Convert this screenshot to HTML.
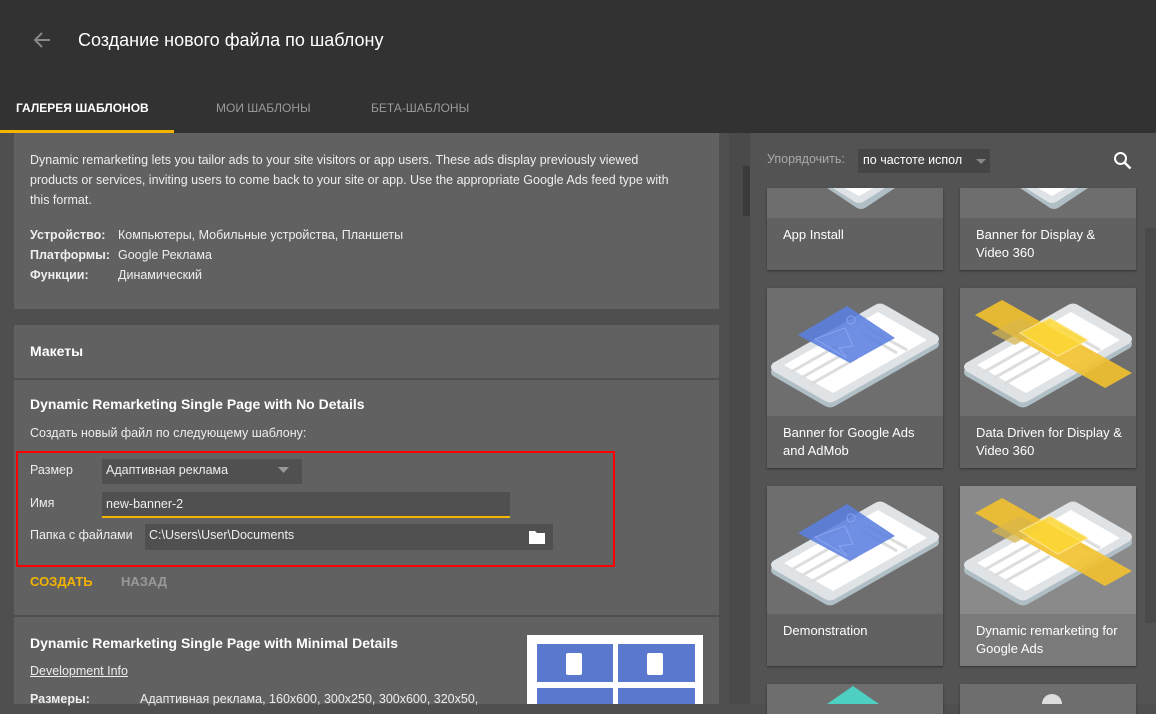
<!DOCTYPE html>
<html><head><meta charset="utf-8"><style>
*{margin:0;padding:0;box-sizing:border-box}
body{width:1156px;height:704px;overflow:hidden;background:#4f4f4f;font-family:"Liberation Sans","Noto Sans CJK SC",sans-serif;color:#fff;position:relative}
.abs{position:absolute}
.hdr{left:0;top:0;width:1156px;height:133px;background:#323232}
.t{font-size:13px;color:#eee}
.panel{background:#616161;left:14px;width:705px}
.card{position:absolute;width:176px;background:#616161;box-shadow:0 1px 2px rgba(0,0,0,.4);overflow:hidden}
.card .img{background:#6e6e6e;position:absolute;left:0;top:0;width:176px;overflow:hidden}
.card .lbl{position:absolute;left:16px;font-size:13px;line-height:18px;color:#fff}
</style></head><body>
<div class="abs hdr"></div>
<svg class="abs" style="left:32px;top:31px" width="20" height="18" viewBox="0 0 20 18"><path d="M18 9H3M10 2L3 9l7 7" stroke="#888" stroke-width="2" fill="none"/></svg>
<div class="abs" style="left:78px;top:30px;font-size:18px;color:#fff">Создание нового файла по шаблону</div>
<div class="abs" style="left:16px;top:101px;font-size:12px;font-weight:bold;color:#fff">ГАЛЕРЕЯ ШАБЛОНОВ</div>
<div class="abs" style="left:216px;top:101px;font-size:12px;color:#999">МОИ ШАБЛОНЫ</div>
<div class="abs" style="left:371px;top:101px;font-size:12px;color:#999">БЕТА-ШАБЛОНЫ</div>
<div class="abs" style="left:0;top:130px;width:174px;height:3px;background:#f4b400"></div>

<div class="abs" style="left:729px;top:133px;width:21px;height:571px;background:#4a4a4a"></div>
<div class="abs" style="left:743px;top:166px;width:7px;height:50px;background:#3a3a3a"></div>
<div class="abs" style="left:750px;top:133px;width:406px;height:571px;background:#535353"></div>
<div class="abs" style="left:1145px;top:228px;width:11px;height:395px;background:#4a4a4a"></div>

<div class="abs panel" style="top:133px;height:176px"></div>
<div class="abs t" style="left:30px;top:150px;width:645px;line-height:20px;font-size:12.5px">Dynamic remarketing lets you tailor ads to your site visitors or app users. These ads display previously viewed products or services, inviting users to come back to your site or app. Use the appropriate Google Ads feed type with this format.</div>
<div class="abs t" style="left:30px;top:225px;font-size:12.5px;line-height:20px;font-weight:bold">Устройство:<br>Платформы:<br>Функции:</div>
<div class="abs t" style="left:118px;top:225px;font-size:12.5px;line-height:20px">Компьютеры, Мобильные устройства, Планшеты<br>Google Реклама<br>Динамический</div>

<div class="abs panel" style="top:325px;height:53px"></div>
<div class="abs" style="left:30px;top:343px;font-size:14px;font-weight:bold">Макеты</div>
<div class="abs panel" style="top:380px;height:235px"></div>
<div class="abs" style="left:30px;top:396px;font-size:14px;font-weight:bold">Dynamic Remarketing Single Page with No Details</div>
<div class="abs t" style="left:30px;top:426px;font-size:12.5px">Создать новый файл по следующему шаблону:</div>
<div class="abs" style="left:16px;top:451px;width:599px;height:116px;border:2px solid #f00"></div>
<div class="abs t" style="left:30px;top:463px;font-size:12.5px">Размер</div>
<div class="abs" style="left:102px;top:459px;width:200px;height:25px;background:#505050"></div>
<div class="abs t" style="left:106px;top:463px;font-size:12.5px">Адаптивная реклама</div>
<svg class="abs" style="left:278px;top:467px" width="12" height="7"><path d="M0 0h11L5.5 6z" fill="#999"/></svg>
<div class="abs t" style="left:30px;top:496px;font-size:12.5px">Имя</div>
<div class="abs" style="left:102px;top:492px;width:408px;height:26px;background:#505050;border-bottom:2px solid #f4b400"></div>
<div class="abs t" style="left:106px;top:497px;font-size:12.5px">new-banner-2</div>
<div class="abs t" style="left:30px;top:528px;font-size:12.5px">Папка с файлами</div>
<div class="abs" style="left:145px;top:524px;width:408px;height:26px;background:#505050"></div>
<div class="abs t" style="left:149px;top:528px;font-size:12.5px">C:\Users\User\Documents</div>
<svg class="abs" style="left:529px;top:530px" width="16" height="14"><path d="M0 1h6l2 2h8v11H0z" fill="#fff"/></svg>
<div class="abs" style="left:30px;top:574px;font-size:13px;font-weight:bold;color:#f4b400">СОЗДАТЬ</div>
<div class="abs" style="left:121px;top:574px;font-size:13px;font-weight:bold;color:#999">НАЗАД</div>

<div class="abs panel" style="top:617px;height:87px"></div>
<div class="abs" style="left:30px;top:635px;font-size:14px;font-weight:bold">Dynamic Remarketing Single Page with Minimal Details</div>
<div class="abs t" style="left:30px;top:664px;font-size:12.5px;text-decoration:underline">Development Info</div>
<div class="abs t" style="left:30px;top:692px;font-size:12.5px;font-weight:bold">Размеры:</div>
<div class="abs t" style="left:140px;top:692px;font-size:12.5px">Адаптивная реклама, 160x600, 300x250, 300x600, 320x50,</div>
<div class="abs" style="left:527px;top:635px;width:176px;height:69px;background:#fff"></div>
<div class="abs" style="left:537px;top:644px;width:76px;height:38px;background:#5b78cf"></div>
<div class="abs" style="left:618px;top:644px;width:77px;height:38px;background:#5b78cf"></div>
<div class="abs" style="left:537px;top:688px;width:76px;height:16px;background:#5b78cf"></div>
<div class="abs" style="left:618px;top:688px;width:77px;height:16px;background:#5b78cf"></div>
<div class="abs" style="left:566px;top:653px;width:16px;height:22px;background:#fff;border-radius:2px"></div>
<div class="abs" style="left:647px;top:653px;width:16px;height:22px;background:#fff;border-radius:2px"></div>

<div class="abs" style="left:767px;top:152px;font-size:12.5px;color:#aaa">Упорядочить:</div>
<div class="abs" style="left:858px;top:149px;width:132px;height:24px;background:#454545"></div>
<div class="abs" style="left:863px;top:153px;font-size:12.5px;color:#fff">по частоте испол</div>
<svg class="abs" style="left:976px;top:159px" width="10" height="5"><path d="M0 0h10L5 5z" fill="#888"/></svg>
<svg class="abs" style="left:1113px;top:151px" width="20" height="20"><circle cx="7.5" cy="7.5" r="5.5" stroke="#fff" stroke-width="2" fill="none"/><path d="M11.5 11.5l6 6" stroke="#fff" stroke-width="2.4"/></svg>

<svg width="0" height="0" style="position:absolute"><defs>
<g id="ph"><path d="M6 80 L108 22 Q113 19 118 22 L170 52 Q174 56 170 60 L68 118 Q63 121 58 118 L6 88 Q2 84 6 80Z" fill="#b0bec5"/><path d="M6 75 L108 17 Q113 14 118 17 L170 47 Q174 51 170 55 L68 113 Q63 116 58 113 L6 83 Q2 79 6 75Z" fill="#dfe3e6"/><path d="M17 77 L111 24 L160 52 L66 105Z" fill="#fff"/><path d="M24 84 L70 58 M34 90 L80 64 M44 96 L90 70 M100 40 L140 62 M95 45 L130 65" stroke="#ddd" stroke-width="3"/></g>
<g id="bl"><use href="#ph"/><path d="M31 47 L80 18 L128 50 L83 75Z" fill="#5b7fe0" opacity=".88"/><circle cx="84" cy="32" r="4" fill="none" stroke="#8aa4f0"/><path d="M48 51 L78 40 L86 58 L72 60 L80 70Z" fill="none" stroke="#8aa4f0"/></g>
<g id="yl"><use href="#ph"/><path d="M15 27 L42 12 L172 85 L145 100Z" fill="#f2c12e" opacity=".9"/><path d="M31 45 L60 30 L84 42 L55 57Z" fill="#d8b64a" opacity=".7"/><path d="M60 45 L90 30 L128 52 L98 68Z" fill="#fdd835" opacity=".85" stroke="#ffe9a0"/></g>
</defs></svg>

<div class="card" style="left:767px;top:188px;height:82px"><div class="img" style="height:30px"><svg width="176" height="30"><path d="M45 -10 L90 20 Q94 22 98 20 L143 -10Z" fill="#b0bec5"/><path d="M50 -10 L88 14 Q92 16 96 14 L134 -10Z" fill="#dfe3e6"/><path d="M60 -10 L92 8 L124 -10Z" fill="#fff"/></svg></div><div class="lbl" style="top:38px">App Install</div></div>
<div class="card" style="left:960px;top:188px;height:82px"><div class="img" style="height:30px"><svg width="176" height="30"><path d="M45 -10 L90 20 Q94 22 98 20 L143 -10Z" fill="#b0bec5"/><path d="M50 -10 L88 14 Q92 16 96 14 L134 -10Z" fill="#dfe3e6"/><path d="M60 -10 L92 8 L124 -10Z" fill="#fff"/></svg></div><div class="lbl" style="top:38px">Banner for Display &amp;<br>Video 360</div></div>

<div class="card" style="left:767px;top:288px;height:180px"><div class="img" style="height:128px"><svg width="176" height="128"><use href="#bl"/></svg></div><div class="lbl" style="top:136px">Banner for Google Ads<br>and AdMob</div></div>
<div class="card" style="left:960px;top:288px;height:180px"><div class="img" style="height:128px"><svg width="176" height="128"><use href="#yl"/></svg></div><div class="lbl" style="top:136px">Data Driven for Display &amp;<br>Video 360</div></div>

<div class="card" style="left:767px;top:486px;height:180px"><div class="img" style="height:128px"><svg width="176" height="128"><use href="#bl"/></svg></div><div class="lbl" style="top:136px">Demonstration</div></div>
<div class="card" style="left:960px;top:486px;height:180px;background:#7a7a7a"><div class="img" style="height:128px;background:#8a8a8a"><svg width="176" height="128"><use href="#yl"/></svg></div><div class="lbl" style="top:136px">Dynamic remarketing for<br>Google Ads</div></div>

<div class="card" style="left:767px;top:684px;height:30px"><div class="img" style="height:30px"><svg width="176" height="20"><path d="M60 20 L86 2 L112 20Z" fill="#4dd0c1"/></svg></div></div>
<div class="card" style="left:960px;top:684px;height:30px"><div class="img" style="height:30px"><svg width="176" height="20"><circle cx="92" cy="20" r="10" fill="#ddd"/></svg></div></div>
</body></html>
